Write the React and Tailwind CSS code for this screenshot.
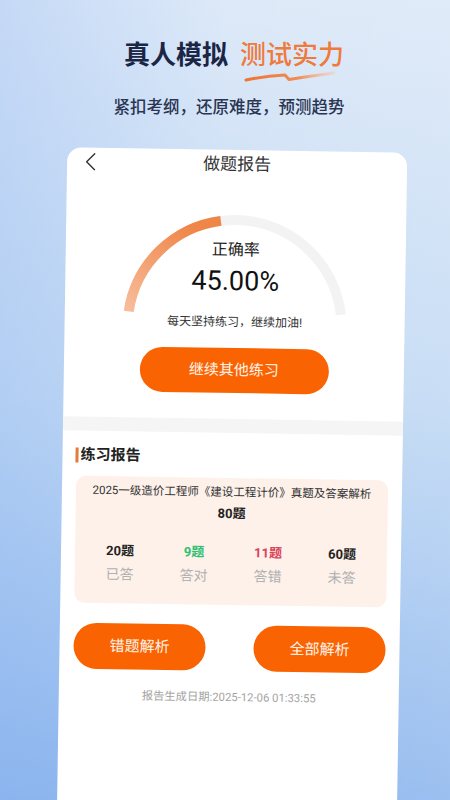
import React from "react";

const FONT = { fontFamily: 'Roboto, "Noto Sans CJK SC", "Noto Sans", sans-serif' };

function Gauge() {
  const cx = 117, cy = 112, r = 107;
  const toPt = (deg) => {
    const a = (deg * Math.PI) / 180;
    return [cx + r * Math.cos(a), cy - r * Math.sin(a)];
  };
  const start = 172.5, end = 7.5;
  const prog = start - 0.45 * (start - end);
  const [sx, sy] = toPt(start);
  const [ex, ey] = toPt(end);
  const [px, py] = toPt(prog);
  return (
    <svg className="absolute inset-0" width="234" height="120" viewBox="0 0 234 120">
      <defs>
        <linearGradient id="og" x1="0" y1="1" x2="0.6" y2="0">
          <stop offset="0" stopColor="#f8bd9c" />
          <stop offset="1" stopColor="#ef8546" />
        </linearGradient>
      </defs>
      <path d={`M${sx} ${sy} A ${r} ${r} 0 0 1 ${ex} ${ey}`} fill="none" stroke="#f3f3f3" strokeWidth="10" />
      <path d={`M${sx} ${sy} A ${r} ${r} 0 0 1 ${px} ${py}`} fill="none" stroke="url(#og)" strokeWidth="10" />
    </svg>
  );
}

function Stat({ num, color, label }) {
  return (
    <div className="flex flex-col items-center">
      <div className="text-[13px] leading-[18px] font-bold" style={{ color }}>{num}</div>
      <div className="mt-[4px] text-[14px] leading-[20px] text-[#b0b0b0]">{label}</div>
    </div>
  );
}

export default function App() {
  return (
    <div className="relative w-[450px] h-[800px] overflow-hidden bg-gradient-to-b from-[#dde9f8] via-[#c3daf4] to-[#90b8ee]" style={FONT}>
      <div className="absolute inset-0 bg-gradient-to-r from-[#7eaaf0]/25 via-transparent to-[#ffffff]/10" />
      <div className="relative">
        <div className="pt-[37px] pl-[18px] flex justify-center items-center text-[26px] leading-[36px]">
          <span className="font-bold text-[#1b2646]">真人模拟</span>
          <span className="relative ml-[12px] font-medium text-[#ef7a3d]">
            测试实力
            <svg className="absolute left-[3px] top-[34px]" width="94" height="11" viewBox="0 0 94 11">
              <defs>
                <linearGradient id="sq" x1="0" y1="0" x2="1" y2="0">
                  <stop offset="0" stopColor="#ee7535" />
                  <stop offset="0.6" stopColor="#f08d55" />
                  <stop offset="1" stopColor="#f6c3a5" stopOpacity="0.4" />
                </linearGradient>
              </defs>
              <path d="M3 9 Q 22 5 42 4 L 46 8.5 Q 68 5 91 2" fill="none" stroke="url(#sq)" strokeWidth="3" strokeLinecap="round" strokeLinejoin="round" />
            </svg>
          </span>
        </div>
        <div className="mt-[23px] pl-[8px] text-center text-[16.5px] leading-[24px] font-medium text-[#2a3552]">
          紧扣考纲，还原难度，预测趋势
        </div>

        <div className="mt-[30px] ml-[62px] w-[340px] h-[680px] rounded-t-[14px] bg-white rotate-[0.9deg]">
          <div className="relative h-[28px] flex items-center justify-center">
            <svg className="absolute left-[18px] top-[5px]" width="11" height="18" viewBox="0 0 11 18">
              <polyline points="9.5,1 1.5,9 9.5,17" fill="none" stroke="#333" strokeWidth="1.4" strokeLinejoin="round" strokeLinecap="round" />
            </svg>
            <div className="text-[17px] leading-[24px] text-[#333]">做题报告</div>
          </div>

          <div className="relative mx-auto mt-[37px] w-[234px] h-[120px]">
            <Gauge />
            <div className="relative flex flex-col items-center pt-[24px]">
              <div className="text-[16px] leading-[22px] text-[#222]">正确率</div>
              <div className="mt-[4px] text-[27px] leading-[32px] text-[#111]">45.00%</div>
              <div className="mt-[17px] text-[12px] leading-[16px] text-[#333]">每天坚持练习，继续加油!</div>
            </div>
          </div>

          <div className="mx-auto mt-[13px] w-[189px] h-[45px] rounded-full bg-[#fa6302] flex items-center justify-center text-[15px] text-[#fff4ea]">
            继续其他练习
          </div>

          <div className="mt-[26px] h-[14px] bg-[#f5f5f5]" />

          <div className="mt-[14px] ml-[13px] flex items-center h-[20px]">
            <div className="w-[3px] h-[15px] bg-[#e07b3a]" />
            <div className="ml-[2px] text-[15px] leading-[20px] font-semibold text-[#222]">练习报告</div>
          </div>

          <div className="mt-[11px] mx-[14px] h-[127px] rounded-[10px] bg-[#fdf1ea] pt-[5px] px-[8px]">
            <div className="text-center text-[11.5px] leading-[18px] text-[#333] whitespace-nowrap">
              2025一级造价工程师《建设工程计价》真题及答案解析
            </div>
            <div className="mt-[4px] text-center text-[13px] leading-[18px] font-bold text-[#222]">80题</div>
            <div className="mt-[21px] grid grid-cols-4">
              <Stat num="20题" color="#222" label="已答" />
              <Stat num="9题" color="#2fbf71" label="答对" />
              <Stat num="11题" color="#d9425a" label="答错" />
              <Stat num="60题" color="#222" label="未答" />
            </div>
          </div>

          <div className="mt-[20px] px-[14px] flex justify-between">
            <div className="w-[132px] h-[46px] rounded-full bg-[#fa6302] flex items-center justify-center text-[15px] text-[#fff4ea]">错题解析</div>
            <div className="w-[132px] h-[46px] rounded-full bg-[#fa6302] flex items-center justify-center text-[15px] text-[#fff4ea]">全部解析</div>
          </div>

          <div className="mt-[19px] text-center text-[11.3px] leading-[16px] text-[#a3a3a3]">
            报告生成日期:2025-12-06 01:33:55
          </div>
        </div>
      </div>
    </div>
  );
}
